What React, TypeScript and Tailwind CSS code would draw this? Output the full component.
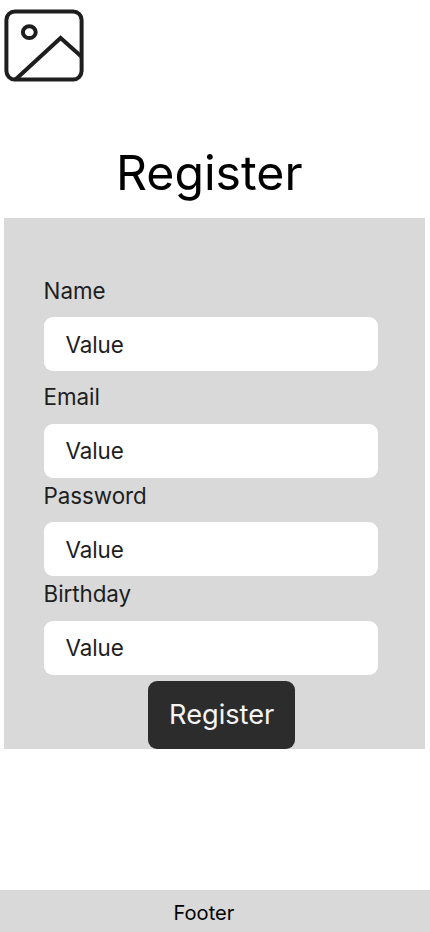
import React from "react";

function Field({ label, className }: { label: string; className: string }) {
  return (
    <label className={`block w-[334px] ${className}`}>
      <span className="block h-[31px] text-[22.4px] leading-[31px] tracking-[-0.06px] text-[#1e1e1e]">{label}</span>
      <span className="mt-[11.65px] flex h-[54.1px] items-center rounded-[9px] bg-white pl-[22px] pt-px text-[22.4px] leading-none tracking-[-0.1px] text-[#1e1e1e]">
        Value
      </span>
    </label>
  );
}

export default function App() {
  return (
    <div className="flex h-[932px] w-[430px] flex-col overflow-hidden bg-white font-['Inter',sans-serif]">
      <header className="h-[144px] pl-1 pt-[9px]">
        <svg width="80" height="73" viewBox="0 0 80 73" fill="none" stroke="#1e1e1e" strokeWidth="4" strokeLinejoin="miter">
          <rect x="2.4" y="2.4" width="75.2" height="68.2" rx="8.5" />
          <ellipse cx="25.3" cy="23.2" rx="6.4" ry="5.9" />
          <path d="M11.5 70.5L56.6 29L77.6 47.8" />
        </svg>
      </header>
      <h1 className="h-[74px] pl-[116px] text-[48.2px] leading-[58px] text-black">Register</h1>
      <main className="ml-1 h-[531px] w-[421px] bg-[#d9d9d9] pl-[39.6px] pt-[56.65px]">
        <Field label="Name" className="" />
        <Field label="Email" className="mt-[9.75px]" />
        <Field label="Password" className="mt-[1.75px]" />
        <Field label="Birthday" className="mt-[1.75px]" />
        <button className="ml-[104.6px] mt-[5.7px] block h-[68px] w-[147px] rounded-[9px] bg-[#2c2c2c] pt-px text-[27.2px] leading-none text-[#f5f5f5]">
          Register
        </button>
      </main>
      <footer className="mt-auto h-[42px] bg-[#d9d9d9] pl-[173.5px] text-[20.1px] leading-[46px] text-black">Footer</footer>
    </div>
  );
}
